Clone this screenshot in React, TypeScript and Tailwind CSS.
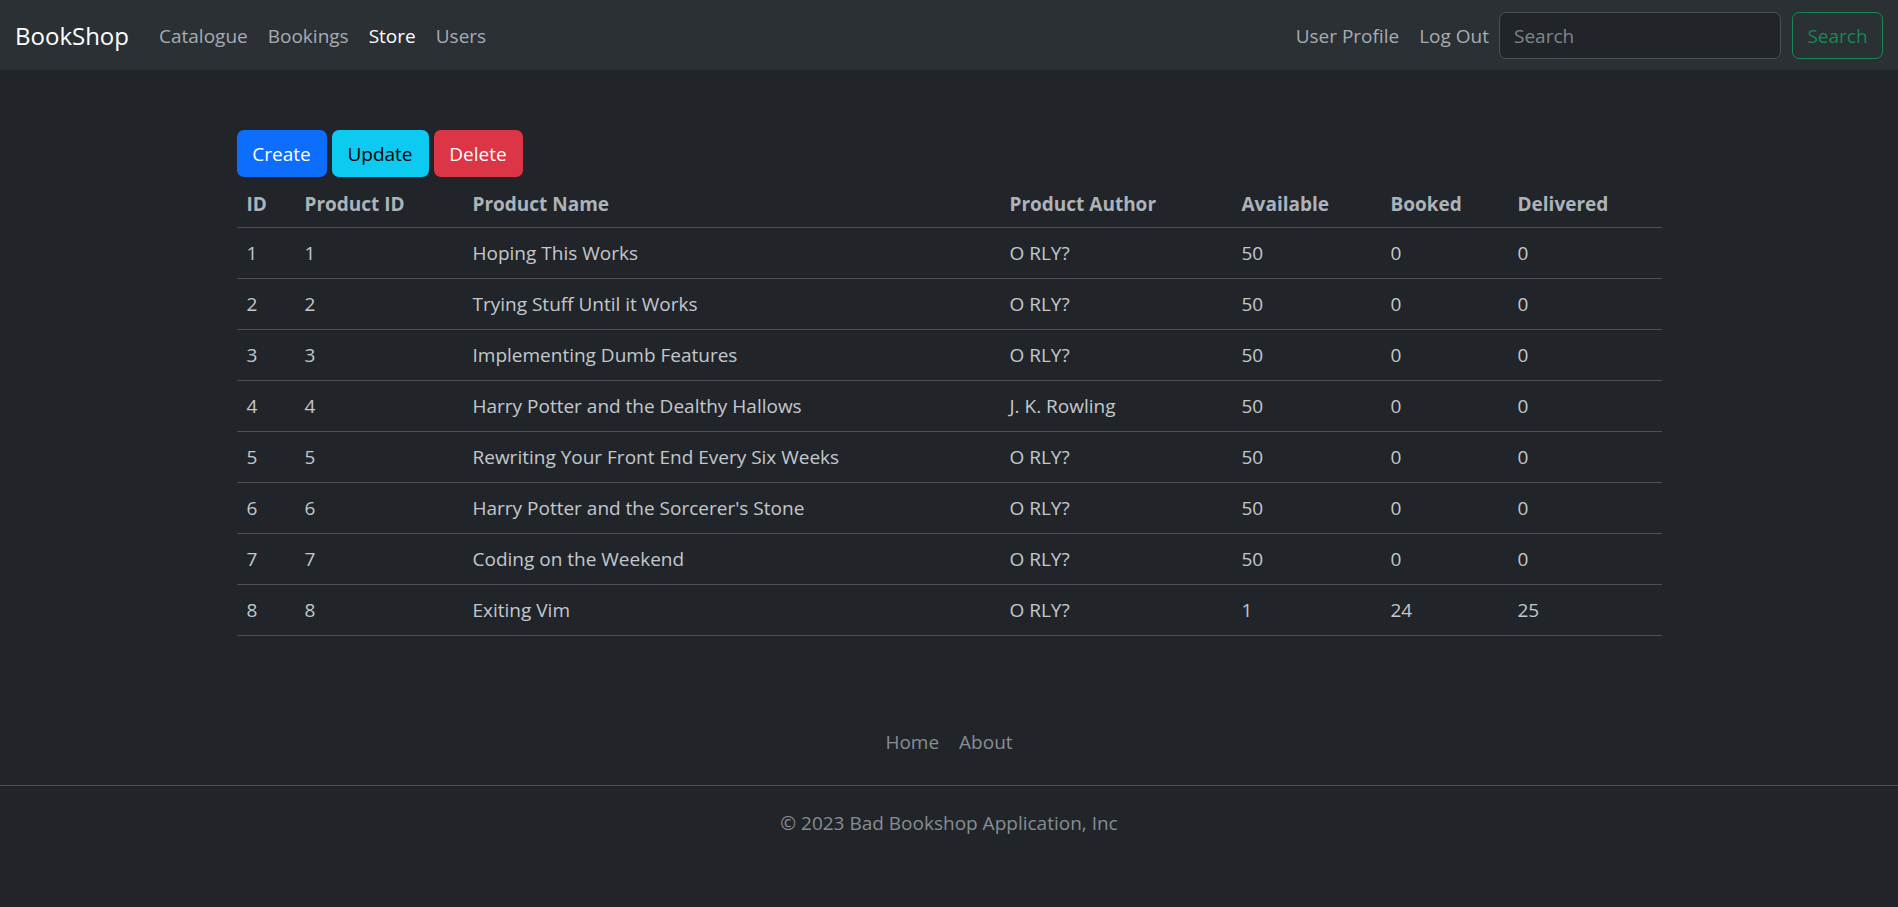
const rows = [
  { id: 1, pid: 1, name: "Hoping This Works", author: "O RLY?", available: 50, booked: 0, delivered: 0 },
  { id: 2, pid: 2, name: "Trying Stuff Until it Works", author: "O RLY?", available: 50, booked: 0, delivered: 0 },
  { id: 3, pid: 3, name: "Implementing Dumb Features", author: "O RLY?", available: 50, booked: 0, delivered: 0 },
  { id: 4, pid: 4, name: "Harry Potter and the Dealthy Hallows", author: "J. K. Rowling", available: 50, booked: 0, delivered: 0 },
  { id: 5, pid: 5, name: "Rewriting Your Front End Every Six Weeks", author: "O RLY?", available: 50, booked: 0, delivered: 0 },
  { id: 6, pid: 6, name: "Harry Potter and the Sorcerer's Stone", author: "O RLY?", available: 50, booked: 0, delivered: 0 },
  { id: 7, pid: 7, name: "Coding on the Weekend", author: "O RLY?", available: 50, booked: 0, delivered: 0 },
  { id: 8, pid: 8, name: "Exiting Vim", author: "O RLY?", available: 1, booked: 24, delivered: 25 },
];

const headers = ["ID", "Product ID", "Product Name", "Product Author", "Available", "Booked", "Delivered"];
const widths = ["w-[58px]", "w-[168px]", "w-[537px]", "w-[232px]", "w-[149px]", "w-[127px]", "w-[154px]"];

function Navbar() {
  return (
    <nav className="h-[70px] bg-[#2b3035] flex items-center px-[15px]">
      <a className="text-[24px] text-white mr-[20px] leading-[30px] pt-[2px]">BookShop</a>
      <ul className="flex text-[19px] leading-[30px] pt-[2px]">
        <li><a className="px-[10px] text-[#a7acb1]">Catalogue</a></li>
        <li><a className="px-[10px] text-[#a7acb1]">Bookings</a></li>
        <li><a className="px-[10px] text-white">Store</a></li>
        <li><a className="px-[10px] text-[#a7acb1]">Users</a></li>
      </ul>
      <div className="ml-auto flex items-center text-[19px] leading-[30px]">
        <a className="px-[10px] text-[#a7acb1] pt-[2px]">User Profile</a>
        <a className="px-[10px] text-[#a7acb1] pt-[2px]">Log Out</a>
        <form className="flex items-center" onSubmit={(e) => e.preventDefault()}>
          <input
            placeholder="Search"
            className="w-[282px] h-[47px] rounded-[7px] border border-[#495057] bg-[#212529] px-[14px] pt-[2px] text-[19px] text-[#dee2e6] placeholder:text-[#80868c] outline-none"
          />
          <button className="ml-[11px] w-[91px] h-[47px] pt-[2px] rounded-[7px] border border-[#198754] text-[#198754] text-[19px]">
            Search
          </button>
        </form>
      </div>
    </nav>
  );
}

export default function App() {
  return (
    <div className="min-h-[907px] bg-[#212529] text-[#dee2e6]" style={{ fontFamily: '"Open Sans", "Noto Sans", sans-serif' }}>
      <Navbar />
      <main className="w-[1425px] mx-auto pt-[60px]">
        <div className="flex gap-[5px] text-[19px]">
          <button className="w-[90px] h-[47px] pt-[2px] rounded-[7px] bg-[#0d6efd] text-white">Create</button>
          <button className="w-[97px] h-[47px] pt-[2px] rounded-[7px] bg-[#0dcaf0] text-black">Update</button>
          <button className="w-[89px] h-[47px] pt-[2px] rounded-[7px] bg-[#dc3545] text-white">Delete</button>
        </div>
        <table className="w-full table-fixed text-[19px] text-left border-collapse">
          <thead>
            <tr className="h-[50px] border-b border-[#4c5054]">
              {headers.map((h, i) => (
                <th key={h} className={`${widths[i]} px-[10px] pt-[4px] font-bold text-[#adb3ba]`}>{h}</th>
              ))}
            </tr>
          </thead>
          <tbody>
            {rows.map((r) => (
              <tr key={r.id} className="h-[51px] border-b border-[#4c5054] text-[#c3c8cd]">
                <td className="px-[10px] pt-[2px]">{r.id}</td>
                <td className="px-[10px] pt-[2px]">{r.pid}</td>
                <td className="px-[10px] pt-[2px]">{r.name}</td>
                <td className="px-[10px] pt-[2px]">{r.author}</td>
                <td className="px-[10px] pt-[2px]">{r.available}</td>
                <td className="px-[10px] pt-[2px]">{r.booked}</td>
                <td className="px-[10px] pt-[2px]">{r.delivered}</td>
              </tr>
            ))}
          </tbody>
        </table>
      </main>
      <footer className="mt-[81px]">
        <div className="flex justify-center h-[50px] pt-[2px] items-center text-[19px] text-[#878d93] gap-[20px]">
          <a>Home</a>
          <a>About</a>
        </div>
        <div className="mt-[18px] border-t border-[#4c5054]" />
        <p className="mt-[22px] text-center text-[19px] leading-[30px] text-[#878d93]">© 2023 Bad Bookshop Application, Inc</p>
      </footer>
    </div>
  );
}
